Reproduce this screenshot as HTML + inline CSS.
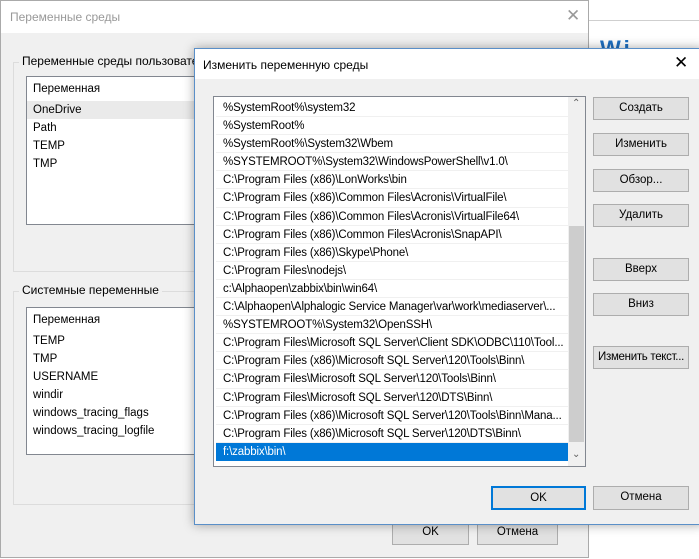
<!DOCTYPE html>
<html><head><meta charset="utf-8"><style>
*{box-sizing:border-box;margin:0;padding:0}
body{width:699px;height:559px;overflow:hidden;background:#fff;font-family:"Liberation Sans",sans-serif;font-size:11.5px;color:#000;position:relative}
.abs{position:absolute}
.btn{position:absolute;background:#e1e1e1;border:1px solid #adadad;text-align:center;line-height:21px;font-size:11.5px;color:#000}
.row{height:18.1px;line-height:18px;padding-left:7px;border-bottom:1px solid #f0f0f0;white-space:nowrap;overflow:hidden;letter-spacing:-0.15px}
.grp{position:absolute;border:1px solid #dcdcdc}
.lbl{position:absolute;background:#f0f0f0;padding:0 3px}
.lv{position:absolute;background:#fff;border:1px solid #828790}
.lv div{height:18px;line-height:18px;padding-left:6px}
</style></head><body>
<!-- background right area -->
<div class="abs" style="left:588px;top:20px;width:111px;height:1px;background:#cfcfcf"></div>
<div class="abs" style="left:600px;top:36px;color:#1e6fc0;font-size:22px;font-weight:bold;letter-spacing:3px">Wi</div>
<!-- back window -->
<div class="abs" style="left:0;top:0;width:589px;height:558px;background:#f0f0f0;border:1px solid #aaa">
 <div class="abs" style="left:0;top:0;width:587px;height:32px;background:#fff;"></div>
 <div class="abs" style="left:9px;top:9px;color:#999;font-size:12px">Переменные среды</div>
 <div class="abs" style="left:565px;top:5px;color:#999;font-size:17px">✕</div>
 <div class="grp" style="left:12px;top:61px;width:600px;height:210px"></div>
 <div class="lbl" style="left:18px;top:53px;font-size:12px">Переменные среды пользовател</div>
 <div class="lv" style="left:25px;top:75px;width:200px;height:149px">
  <div style="height:24px;line-height:24px">Переменная</div>
  <div style="background:#eaeaea">OneDrive</div><div>Path</div><div>TEMP</div><div>TMP</div>
 </div>
 <div class="grp" style="left:12px;top:290px;width:600px;height:214px"></div>
 <div class="lbl" style="left:18px;top:282px;font-size:12px">Системные переменные</div>
 <div class="lv" style="left:25px;top:306px;width:200px;height:148px">
  <div style="height:24px;line-height:24px">Переменная</div>
  <div>TEMP</div><div>TMP</div><div>USERNAME</div><div>windir</div><div>windows_tracing_flags</div><div>windows_tracing_logfile</div>
 </div>
 <div class="btn" style="left:391px;top:519px;width:77px;height:25px;line-height:23px">OK</div>
 <div class="btn" style="left:476px;top:519px;width:81px;height:25px;line-height:23px">Отмена</div>
</div>
<!-- dialog -->
<div class="abs" style="left:194px;top:48px;width:510px;height:477px;background:#f0f0f0;border:1px solid #5a8fc8;box-shadow:0 0 10px rgba(0,0,0,.35)">
 <div class="abs" style="left:0;top:0;width:510px;height:30px;background:#fff"></div>
 <div class="abs" style="left:8px;top:9px;font-size:12px">Изменить переменную среды</div>
 <div class="abs" style="left:479px;top:4px;font-size:17px">✕</div>
 <div class="abs" style="left:18px;top:47px;width:373px;height:371px;background:#fff;border:1px solid #828790;overflow:hidden">
  <div class="abs" style="left:2px;top:2px;width:352px">
   <div class="row">%SystemRoot%\system32</div>
   <div class="row">%SystemRoot%</div>
   <div class="row">%SystemRoot%\System32\Wbem</div>
   <div class="row">%SYSTEMROOT%\System32\WindowsPowerShell\v1.0\</div>
   <div class="row">C:\Program Files (x86)\LonWorks\bin</div>
   <div class="row">C:\Program Files (x86)\Common Files\Acronis\VirtualFile\</div>
   <div class="row">C:\Program Files (x86)\Common Files\Acronis\VirtualFile64\</div>
   <div class="row">C:\Program Files (x86)\Common Files\Acronis\SnapAPI\</div>
   <div class="row">C:\Program Files (x86)\Skype\Phone\</div>
   <div class="row">C:\Program Files\nodejs\</div>
   <div class="row">c:\Alphaopen\zabbix\bin\win64\</div>
   <div class="row">C:\Alphaopen\Alphalogic Service Manager\var\work\mediaserver\...</div>
   <div class="row">%SYSTEMROOT%\System32\OpenSSH\</div>
   <div class="row">C:\Program Files\Microsoft SQL Server\Client SDK\ODBC\110\Tool...</div>
   <div class="row">C:\Program Files (x86)\Microsoft SQL Server\120\Tools\Binn\</div>
   <div class="row">C:\Program Files\Microsoft SQL Server\120\Tools\Binn\</div>
   <div class="row">C:\Program Files\Microsoft SQL Server\120\DTS\Binn\</div>
   <div class="row">C:\Program Files (x86)\Microsoft SQL Server\120\Tools\Binn\Mana...</div>
   <div class="row">C:\Program Files (x86)\Microsoft SQL Server\120\DTS\Binn\</div>
   <div class="row" style="background:#0078d7;color:#fff;border:0">f:\zabbix\bin\</div>
  </div>
  <div class="abs" style="left:354px;top:0;width:17px;height:369px;background:#f0f0f0"></div>
  <div class="abs" style="left:355px;top:129px;width:15px;height:216px;background:#cdcdcd"></div>
  <div class="abs" style="left:358px;top:1px;font-size:10px;color:#606060">⌃</div>
  <div class="abs" style="left:358px;top:352px;font-size:10px;color:#606060">⌄</div>
 </div>
 <div class="btn" style="left:398px;top:48px;width:96px;height:23px">Создать</div>
 <div class="btn" style="left:398px;top:84px;width:96px;height:23px">Изменить</div>
 <div class="btn" style="left:398px;top:120px;width:96px;height:23px">Обзор...</div>
 <div class="btn" style="left:398px;top:155px;width:96px;height:23px">Удалить</div>
 <div class="btn" style="left:398px;top:209px;width:96px;height:23px">Вверх</div>
 <div class="btn" style="left:398px;top:244px;width:96px;height:23px">Вниз</div>
 <div class="btn" style="left:398px;top:297px;width:96px;height:23px;letter-spacing:-0.3px">Изменить текст...</div>
 <div class="btn" style="left:296px;top:437px;width:95px;height:24px;border:2px solid #0078d7;line-height:20px">OK</div>
 <div class="btn" style="left:398px;top:437px;width:96px;height:24px">Отмена</div>
</div>
</body></html>
